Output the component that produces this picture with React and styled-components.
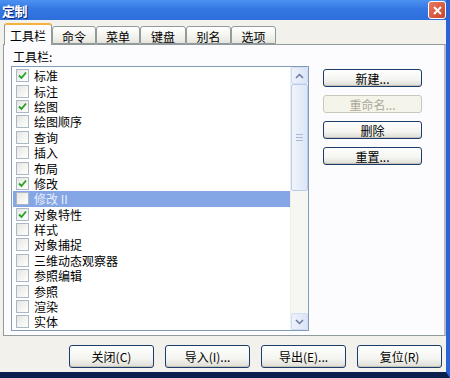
import React from "react";
import styled, { createGlobalStyle } from "styled-components";

const GlobalStyle = createGlobalStyle`
  body {
    margin: 0;
    background: #ffffff;
    font-family: "Noto Sans CJK SC", "DejaVu Sans", sans-serif;
  }
`;

const Frame = styled.div`
  width: 450px;
  height: 378px;
  box-sizing: border-box;
  display: flex;
  flex-direction: column;
  background: #f2f1ec;
  border-right: 4px solid #2a63d8;
  border-bottom: 6px solid #0b1f4e;
  overflow: hidden;
  font-size: 12px;
  color: #000;
`;

const TitleBar = styled.div`
  height: 20px;
  margin-right: -4px;
  flex-shrink: 0;
  display: flex;
  align-items: center;
  justify-content: space-between;
  padding: 0 2px 0 2px;
  background: linear-gradient(#4c92f0, #3477e2 45%, #2d6edc);
`;

const Title = styled.span`
  color: #ffffff;
  font-weight: bold;
  font-size: 13px;
  letter-spacing: -0.5px;
  text-shadow: 1px 1px 0 #0a2a80;
`;

const CloseBox = styled.div`
  width: 16px;
  height: 16px;
  border-radius: 3px;
  border: 1px solid #ffffff;
  background: linear-gradient(135deg, #e97a62, #c9442a);
  display: flex;
  align-items: center;
  justify-content: center;
  margin-right: 2px;
`;

const Body = styled.div`
  flex: 1;
  display: flex;
  flex-direction: column;
  padding: 3px 0 0 3px;
`;

const TabStrip = styled.div`
  display: flex;
  align-items: flex-end;
  height: 21px;
  padding-left: 1px;
  position: relative;
  z-index: 1;
`;

const Tab = styled.div`
  box-sizing: border-box;
  width: ${(p) => p.w}px;
  height: ${(p) => (p.active ? 22 : 18)}px;
  margin-bottom: ${(p) => (p.active ? -1 : 0)}px;
  display: flex;
  align-items: center;
  justify-content: center;
  border: 1px solid #919b9c;
  border-bottom: ${(p) => (p.active ? "none" : "1px solid #919b9c")};
  border-top: ${(p) => (p.active ? "2px solid #f4b23c" : "1px solid #919b9c")};
  border-radius: 3px 3px 0 0;
  background: ${(p) =>
    p.active ? "#fcfcfe" : "linear-gradient(#ffffff, #f0f0ea 70%, #e4e3dc)"};
  padding-top: ${(p) => (p.active ? 1 : 2)}px;
  font-size: 12px;
`;

const Panel = styled.div`
  box-sizing: border-box;
  width: 443px;
  height: 292px;
  border: 1px solid #919b9c;
  border-right: 2px solid #b8bcc0;
  background: #fcfcfe;
  display: flex;
  padding: 2px 24px 0 7px;
  gap: 14px;
`;

const LeftCol = styled.div`
  display: flex;
  flex-direction: column;
`;

const Label = styled.div`
  height: 19px;
  line-height: 19px;
  padding-left: 2px;
`;

const ListBox = styled.div`
  box-sizing: border-box;
  width: 298px;
  height: 265px;
  border: 1px solid #7f9db9;
  background: #ffffff;
  display: flex;
`;

const Rows = styled.div`
  flex: 1;
  padding-top: 1px;
  overflow: hidden;
`;

const Row = styled.div`
  height: 15.4px;
  display: flex;
  align-items: center;
  gap: 5px;
  padding-left: 3px;
  margin-left: 1px;
  background: ${(p) => (p.selected ? "#84a6e4" : "transparent")};
  color: ${(p) => (p.selected ? "#e8eefc" : "#000")};
  font-size: 12px;
  line-height: 15px;
  white-space: nowrap;
`;

const Box = styled.div`
  box-sizing: border-box;
  width: 13px;
  height: 13px;
  flex-shrink: 0;
  border: 1px solid #a9b7c6;
  background: linear-gradient(135deg, #e6e6e0, #ffffff);
  display: flex;
  align-items: center;
  justify-content: center;
`;

const ScrollBar = styled.div`
  width: 17px;
  display: flex;
  flex-direction: column;
  background: #f6f6f3;
  border-left: 1px solid #eeeeea;
`;

const ArrowBtn = styled.div`
  box-sizing: border-box;
  height: 17px;
  border: 1px solid #d0dcf4;
  border-radius: 2px;
  background: linear-gradient(90deg, #eef2fb, #dbe4f6);
  display: flex;
  align-items: center;
  justify-content: center;
`;

const Thumb = styled.div`
  box-sizing: border-box;
  height: 107px;
  border: 1px solid #bccbe8;
  border-radius: 2px;
  background: linear-gradient(90deg, #f0f4fc, #dde6f6);
  display: flex;
  flex-direction: column;
  align-items: center;
  justify-content: center;
  gap: 2px;
`;

const Grip = styled.div`
  width: 7px;
  height: 1px;
  background: #a8b8d8;
`;

const Track = styled.div`
  flex: 1;
`;

const RightCol = styled.div`
  display: flex;
  flex-direction: column;
  gap: 8px;
  padding-top: 22px;
`;

const Button = styled.div`
  box-sizing: border-box;
  width: ${(p) => p.w}px;
  height: ${(p) => p.h}px;
  display: flex;
  align-items: center;
  justify-content: center;
  border: 1px solid ${(p) => (p.disabled ? "#c9c7ba" : "#1c3c6c")};
  border-radius: 3px;
  background: ${(p) =>
    p.disabled
      ? "#f5f4ea"
      : "linear-gradient(#ffffff, #f4f4f0 60%, #dedcd4)"};
  color: ${(p) => (p.disabled ? "#aca899" : "#000")};
  font-size: 12px;
  box-shadow: ${(p) =>
    p.disabled ? "none" : "inset 0 -1px 0 #c5c2b8"};
`;

const Footer = styled.div`
  flex: 1;
  display: flex;
  justify-content: flex-end;
  align-items: flex-start;
  gap: 11px;
  padding: 9px 4px 0 0;
`;

const Check = () => (
  <svg width="9" height="9" viewBox="0 0 9 9">
    <path d="M1 4.5 L3.5 7 L8 1.5" fill="none" stroke="#21a121" strokeWidth="1.8" />
  </svg>
);

const items = [
  ["标准", true],
  ["标注", false],
  ["绘图", true],
  ["绘图顺序", false],
  ["查询", false],
  ["插入", false],
  ["布局", false],
  ["修改", true],
  ["修改 II", false, true],
  ["对象特性", true],
  ["样式", false],
  ["对象捕捉", false],
  ["三维动态观察器", false],
  ["参照编辑", false],
  ["参照", false],
  ["渲染", false],
  ["实体", false],
];

const tabs = [
  ["工具栏", 48],
  ["命令", 44],
  ["菜单", 44],
  ["键盘", 46],
  ["别名", 45],
  ["选项", 45],
];

export default function App() {
  return (
    <>
      <GlobalStyle />
      <Frame>
        <TitleBar>
          <Title>定制</Title>
          <CloseBox>
            <svg width="9" height="9" viewBox="0 0 9 9">
              <path d="M1 1 L8 8 M8 1 L1 8" stroke="#fff" strokeWidth="2" />
            </svg>
          </CloseBox>
        </TitleBar>
        <Body>
          <TabStrip>
            {tabs.map(([t, w], i) => (
              <Tab key={t} w={w} active={i === 0}>
                {t}
              </Tab>
            ))}
          </TabStrip>
          <Panel>
            <LeftCol>
              <Label>工具栏:</Label>
              <ListBox>
                <Rows>
                  {items.map(([name, on, sel]) => (
                    <Row key={name} selected={sel}>
                      <Box>{on && <Check />}</Box>
                      {name}
                    </Row>
                  ))}
                </Rows>
                <ScrollBar>
                  <ArrowBtn>
                    <svg width="9" height="6" viewBox="0 0 9 6">
                      <path d="M1 5 L4.5 1.5 L8 5" fill="none" stroke="#6a7a98" strokeWidth="1.5" />
                    </svg>
                  </ArrowBtn>
                  <Thumb>
                    <Grip />
                    <Grip />
                    <Grip />
                  </Thumb>
                  <Track />
                  <ArrowBtn>
                    <svg width="9" height="6" viewBox="0 0 9 6">
                      <path d="M1 1 L4.5 4.5 L8 1" fill="none" stroke="#6a7a98" strokeWidth="1.5" />
                    </svg>
                  </ArrowBtn>
                </ScrollBar>
              </ListBox>
            </LeftCol>
            <RightCol>
              <Button w={99} h={18}>新建...</Button>
              <Button w={99} h={18} disabled>重命名...</Button>
              <Button w={99} h={18}>删除</Button>
              <Button w={99} h={18}>重置...</Button>
            </RightCol>
          </Panel>
          <Footer>
            <Button w={85} h={23}>关闭(C)</Button>
            <Button w={85} h={23}>导入(I)...</Button>
            <Button w={85} h={23}>导出(E)...</Button>
            <Button w={85} h={23}>复位(R)</Button>
          </Footer>
        </Body>
      </Frame>
    </>
  );
}
